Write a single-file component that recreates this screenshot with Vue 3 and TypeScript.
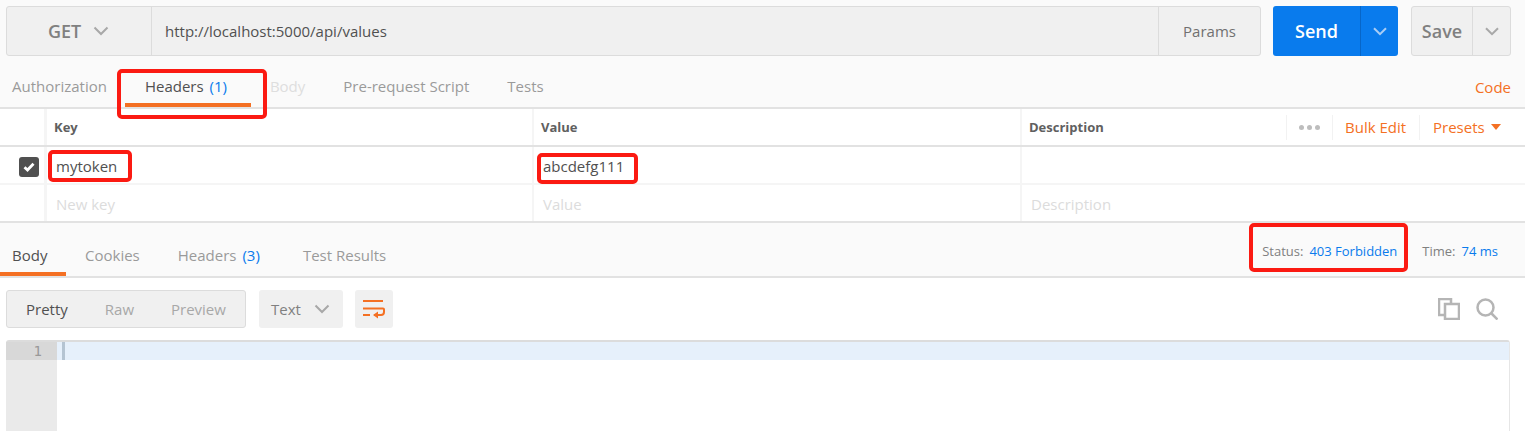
<script setup lang="ts">
const tabs = [
  { label: 'Authorization', cls: 'first' },
  { label: 'Headers', count: '(1)', cls: 'active wide' },
  { label: 'Body', cls: 'faint' },
  { label: 'Pre-request Script', cls: '' },
  { label: 'Tests', cls: '' }
]
const resTabs = [
  { label: 'Body', cls: 'active' },
  { label: 'Cookies', cls: '' },
  { label: 'Headers', count: '(3)', cls: '' },
  { label: 'Test Results', cls: '' }
]
</script>

<template>
  <div class="page">
    <div class="urlrow">
      <div class="urlbar">
        <div class="method">
          <span>GET</span>
          <svg class="chev" width="16" height="10" viewBox="0 0 16 10"><path d="M1.5 1.5 8 8l6.5-6.5" /></svg>
        </div>
        <div class="url">http://localhost:5000/api/values</div>
        <div class="params">Params</div>
      </div>
      <div class="send">
        <div class="send-main">Send</div>
        <div class="send-arrow">
          <svg class="chev light" width="14" height="9" viewBox="0 0 14 9"><path d="M1 1.2 7 7.2l6-6" /></svg>
        </div>
      </div>
      <div class="save">
        <div class="save-main">Save</div>
        <div class="save-arrow">
          <svg class="chev" width="14" height="9" viewBox="0 0 14 9"><path d="M1 1.2 7 7.2l6-6" /></svg>
        </div>
      </div>
    </div>

    <div class="tabs">
      <div v-for="t in tabs" :key="t.label" class="tab" :class="t.cls">
        {{ t.label }}<span v-if="t.count" class="count">{{ t.count }}</span>
      </div>
      <div class="code">Code</div>
    </div>

    <div class="table">
      <div class="row head">
        <div class="c0"></div>
        <div class="c1">Key</div>
        <div class="c2">Value</div>
        <div class="c3">
          <span>Description</span>
          <div class="tools">
            <div class="dots"><i></i><i></i><i></i></div>
            <div class="bulk">Bulk Edit</div>
            <div class="presets">Presets<b></b></div>
          </div>
        </div>
      </div>
      <div class="row">
        <div class="c0">
          <div class="check">
            <svg width="12" height="10" viewBox="0 0 12 10"><path d="M1.5 5.200 4.500 8l6-6.300" /></svg>
          </div>
        </div>
        <div class="c1 val">mytoken</div>
        <div class="c2 val">abcdefg111</div>
        <div class="c3"></div>
      </div>
      <div class="row last">
        <div class="c0"></div>
        <div class="c1 val ph">New key</div>
        <div class="c2 val ph">Value</div>
        <div class="c3 val ph">Description</div>
      </div>
    </div>

    <div class="restabs">
      <div v-for="t in resTabs" :key="t.label" class="rtab" :class="t.cls">
        {{ t.label }}<span v-if="t.count" class="count">{{ t.count }}</span>
      </div>
      <div class="meta">
        <span class="k">Status:</span><span class="v">403 Forbidden</span>
        <span class="k time">Time:</span><span class="v">74 ms</span>
      </div>
    </div>

    <div class="toolbar">
      <div class="modes">
        <span class="on">Pretty</span>
        <span>Raw</span>
        <span>Preview</span>
      </div>
      <div class="lang">
        Text
        <svg class="chev" width="16" height="10" viewBox="0 0 16 10"><path d="M1.5 1.5 8 8l6.5-6.5" /></svg>
      </div>
      <div class="wrap">
        <svg width="22" height="20" viewBox="0 0 22 20">
          <path d="M0 2h20M0 9.500h20c1 0 1 0 1 1v2.500c0 2-1 3-3 3h-7M0 16h7" />
          <path class="fill" d="M15 12.500v7l-5-3.500z" />
        </svg>
      </div>
      <div class="side">
        <svg width="22" height="22" viewBox="0 0 22 22">
          <path d="M6 17H1V1h12v4" />
          <path d="M7 6h14v15H7z" />
        </svg>
        <svg width="22" height="22" viewBox="0 0 22 22">
          <circle cx="9.500" cy="9.500" r="8" />
          <path d="m15.500 15.500 6 6" />
        </svg>
      </div>
    </div>

    <div class="editor">
      <div class="gutter"><div class="ln">1</div></div>
      <div class="lines"><div class="line"><i></i></div></div>
    </div>

    <!-- red annotation boxes drawn over the screenshot -->
    <div class="mark m1"></div>
    <div class="mark m2"></div>
    <div class="mark m3"></div>
    <div class="mark m4"></div>
  </div>
</template>

<style>
html, body {
  margin: 0;
  background: #fff;
}
</style>

<style scoped>
.page {
  position: relative;
  width: 1525px;
  height: 431px;
  overflow: hidden;
  font-family: "Open Sans", sans-serif;
  font-size: 15px;
  color: #505050;
  background: #fff;
}
.chev {
  fill: none;
  stroke: #a8a8a8;
  stroke-width: 2;
}
.chev.light {
  stroke: #a9cdf5;
}

.urlrow {
  display: flex;
  height: 55px;
  padding-top: 6px;
  box-sizing: border-box;
  background: #fafafa;
}
.urlbar {
  display: flex;
  width: 1255px;
  height: 50px;
  margin-left: 6px;
  box-sizing: border-box;
  border: 1px solid #dcdcdc;
  border-radius: 3px;
  background: #f0f0f0;
}
.method {
  display: flex;
  align-items: center;
  gap: 12px;
  width: 145px;
  padding-left: 41px;
  box-sizing: border-box;
  border-right: 1px solid #dcdcdc;
  font-size: 18px;
  font-weight: 600;
  color: #808080;
}
.url {
  flex: 1;
  padding-left: 13px;
  line-height: 48px;
  color: #505050;
}
.params {
  width: 101px;
  border-left: 1px solid #dcdcdc;
  text-align: center;
  line-height: 48px;
  color: #707070;
}
.send {
  display: flex;
  width: 125px;
  height: 50px;
  margin-left: 12px;
  border-radius: 3px;
  background: #097bed;
  color: #fff;
}
.send-main {
  width: 87px;
  text-align: center;
  line-height: 50px;
  font-size: 18px;
  font-weight: 600;
}
.send-arrow {
  display: flex;
  flex: 1;
  align-items: center;
  justify-content: center;
  border-left: 1px solid #0766c8;
}
.save {
  display: flex;
  width: 100px;
  height: 50px;
  margin-left: 13px;
  box-sizing: border-box;
  border: 1px solid #dcdcdc;
  border-radius: 3px;
  background: #f0f0f0;
}
.save-main {
  width: 60px;
  text-align: center;
  line-height: 48px;
  font-size: 18px;
  font-weight: 600;
  color: #808080;
}
.save-arrow {
  display: flex;
  flex: 1;
  align-items: center;
  justify-content: center;
  border-left: 1px solid #dcdcdc;
}

.tabs {
  display: flex;
  height: 54px;
  box-sizing: border-box;
  border-bottom: 2px solid #e2e2e2;
  background: #fafafa;
}
.tab {
  position: relative;
  padding: 0 19px;
  line-height: 63px;
  color: #9a9a9a;
  white-space: nowrap;
}
.tab.first {
  padding-left: 12px;
  padding-right: 18px;
}
.tab.wide {
  width: 126px;
  box-sizing: border-box;
  padding-left: 20px;
}
.tab.active {
  color: #505050;
}
.tab.active::after {
  content: "";
  position: absolute;
  left: 0;
  right: 0;
  top: 48px;
  height: 4px;
  background: #f47023;
}
.tab.faint {
  color: #dedede;
}
.count {
  margin-left: 6px;
  color: #097bed;
}
.code {
  margin-left: auto;
  padding-right: 14px;
  line-height: 65px;
  color: #f47023;
}

.row {
  display: flex;
  height: 38px;
  box-sizing: border-box;
  border-bottom: 2px solid #f5f5f5;
}
.row.head {
  border-bottom-color: #e2e2e2;
}
.row.last {
  border-bottom-color: #e2e2e2;
}
.c0 {
  display: flex;
  align-items: center;
  width: 47px;
  padding: 4px 0 0 19px;
  box-sizing: border-box;
  border-right: 3px solid #f5f5f5;
}
.c1, .c2, .c3 {
  box-sizing: border-box;
  padding-left: 7px;
  line-height: 36px;
  border-right: 2px solid #f5f5f5;
}
.c1 {
  width: 487px;
}
.c2 {
  width: 488px;
}
.c3 {
  display: flex;
  flex: 1;
  justify-content: space-between;
  border-right: 0;
}
.head .c1, .head .c2, .head .c3 {
  font-size: 13px;
  font-weight: 700;
  color: #606060;
}
.val {
  padding-left: 9px;
  line-height: 38px;
}
.ph {
  color: #dcdcdc;
}
.check {
  display: flex;
  flex: none;
  align-items: center;
  justify-content: center;
  width: 20px;
  height: 20px;
  border-radius: 3px;
  background: #505050;
}
.check svg {
  fill: none;
  stroke: #fff;
  stroke-width: 2.800;
}
.tools {
  display: flex;
  align-items: center;
  height: 36px;
  font-size: 15px;
  font-weight: 400;
  color: #f47023;
}
.tools > div {
  display: flex;
  align-items: center;
  height: 25px;
  border-left: 1px solid #f2f2f2;
  box-sizing: border-box;
}
.dots {
  gap: 3px;
  width: 46px;
  padding-left: 12px;
}
.dots i {
  width: 5px;
  height: 5px;
  border-radius: 50%;
  background: #bdbdbd;
}
.bulk {
  width: 87px;
  padding-left: 12px;
}
.presets {
  width: 106px;
  padding-left: 13px;
}
.presets b {
  width: 0;
  height: 0;
  margin-left: 6px;
  border-left: 5px solid transparent;
  border-right: 5px solid transparent;
  border-top: 6px solid #f47023;
}

.restabs {
  display: flex;
  height: 55px;
  box-sizing: border-box;
  border-bottom: 2px solid #e2e2e2;
  background: #fafafa;
}
.rtab {
  position: relative;
  padding: 0 19px;
  line-height: 65px;
  color: #9a9a9a;
  white-space: nowrap;
}
.rtab:first-child {
  width: 66px;
  box-sizing: border-box;
  padding: 0 0 0 12px;
}
.rtab.active {
  color: #505050;
}
.rtab.active::after {
  content: "";
  position: absolute;
  left: 0;
  right: 0;
  bottom: 0;
  height: 4px;
  background: #f47023;
}
.rtab + .rtab + .rtab + .rtab {
  padding-left: 24px;
}
.meta {
  margin-left: auto;
  padding-right: 27px;
  line-height: 57px;
  font-size: 13px;
}
.meta .k {
  margin-right: 6px;
  color: #808080;
}
.meta .v {
  color: #097bed;
}
.meta .time {
  margin-left: 25px;
}

.toolbar {
  display: flex;
  align-items: center;
  height: 38px;
  margin-top: 12px;
  padding: 0 27px 0 6px;
}
.modes {
  display: flex;
  align-items: center;
  width: 240px;
  height: 38px;
  box-sizing: border-box;
  padding-left: 19px;
  gap: 37px;
  border: 1px solid #dcdcdc;
  border-radius: 3px;
  background: #f0f0f0;
  color: #a8a8a8;
}
.modes .on {
  color: #505050;
}
.lang {
  display: flex;
  align-items: center;
  gap: 13px;
  width: 84px;
  height: 38px;
  margin-left: 13px;
  padding-left: 12px;
  box-sizing: border-box;
  border-radius: 3px;
  background: #f0f0f0;
  color: #808080;
}
.wrap {
  display: flex;
  align-items: center;
  justify-content: center;
  width: 38px;
  height: 38px;
  margin-left: 12px;
  border-radius: 3px;
  background: #f0f0f0;
}
.wrap svg {
  fill: none;
  stroke: #f47023;
  stroke-width: 2;
}
.wrap .fill {
  fill: #f47023;
  stroke: none;
}
.side {
  display: flex;
  align-items: center;
  gap: 16px;
  margin-left: auto;
}
.side svg {
  fill: none;
  stroke: #b5b5b5;
  stroke-width: 2.500;
}

.editor {
  display: flex;
  width: 1504px;
  height: 92px;
  margin: 12px 0 0 6px;
  box-sizing: border-box;
  border-top: 2px solid #dcdcdc;
  border-right: 1px solid #e6e6e6;
  border-radius: 3px 3px 0 0;
}
.gutter {
  width: 51px;
  background: #eaeaea;
}
.ln {
  height: 18px;
  padding-right: 15px;
  text-align: right;
  line-height: 18px;
  font-family: "DejaVu Sans Mono", monospace;
  font-size: 14px;
  color: #999;
  background: #d8d8d8;
}
.lines {
  flex: 1;
}
.line {
  height: 18px;
  padding-left: 5px;
  background: #e6f0fb;
}
.line i {
  display: block;
  width: 3px;
  height: 18px;
  background: #b5c4d2;
}

.mark {
  position: absolute;
  box-sizing: border-box;
  border: 4px solid #fb1a12;
  border-radius: 5px;
}
.m1 {
  left: 117px;
  top: 69px;
  width: 150px;
  height: 50px;
}
.m2 {
  left: 48px;
  top: 150px;
  width: 84px;
  height: 32px;
}
.m3 {
  left: 537px;
  top: 153px;
  width: 101px;
  height: 31px;
}
.m4 {
  left: 1249px;
  top: 223px;
  width: 159px;
  height: 49px;
}
</style>
